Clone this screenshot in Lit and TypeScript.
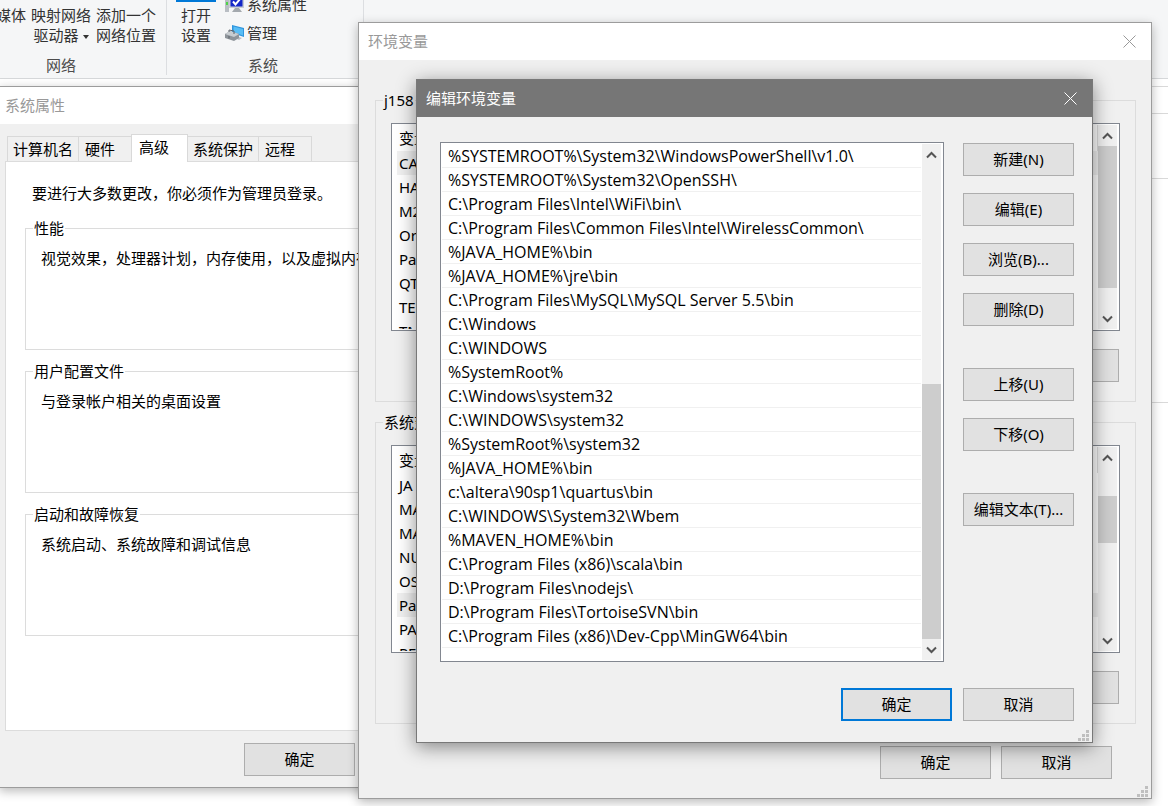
import { LitElement, html, css, svg, nothing } from "lit";
import { customElement, property } from "lit/decorators.js";
import { classMap } from "lit/directives/class-map.js";

const base = css`
  :host {
    display: block;
    font-family: "Noto Sans", "Noto Sans CJK SC", sans-serif;
    font-size: 15px;
    line-height: 20px;
    color: #000;
  }
  *,
  *::before,
  *::after {
    box-sizing: border-box;
  }
  button {
    font: inherit;
    color: inherit;
    padding: 0;
    margin: 0;
  }
`;

const push = css`
  .push {
    display: block;
    width: 111px;
    height: 33px;
    flex: none;
    padding-bottom: 2px;
    background: #e1e1e1;
    border: 1px solid #adadad;
    text-align: center;
    white-space: nowrap;
  }
  .push.default {
    border: 2px solid #0078d7;
  }
`;

/** A desktop window: title bar, close button, body and optional resize grip. */
@customElement("desk-window")
class DeskWindow extends LitElement {
  static styles = [
    base,
    css`
      .frame {
        display: flex;
        flex-direction: column;
        background: #f0f0f0;
        border: 1px solid #9c9c9c;
        box-shadow: 0 3px 10px rgba(0, 0, 0, 0.28);
      }
      .frame.active {
        border-color: #787878;
        box-shadow: 0 4px 18px rgba(0, 0, 0, 0.45);
      }
      .bar {
        display: flex;
        align-items: center;
        justify-content: space-between;
        height: 37px;
        padding: 0 14px 0 9px;
        background: #fff;
        color: #999;
      }
      .active .bar {
        background: #767676;
        color: #fff;
      }
      h1 {
        margin: 0;
        padding-bottom: 2px;
        font-size: 15px;
        font-weight: 400;
      }
      .tight .bar {
        padding-left: 5px;
      }
      .close {
        display: grid;
        place-items: center;
        width: 15px;
        height: 15px;
        border: 0;
        background: none;
      }
      .grip {
        position: absolute;
        right: 4px;
        bottom: 2px;
        display: block;
      }
    `,
  ];
  @property() heading = "";
  @property({ type: Boolean }) active = false;
  @property({ type: Boolean }) tight = false;
  @property({ type: Boolean }) grip = false;

  render() {
    const dots = [[8, 0], [4, 4], [8, 4], [0, 8], [4, 8], [8, 8]];
    return html`<section class=${classMap({ frame: true, active: this.active, tight: this.tight })}>
      <header class="bar">
        <h1>${this.heading}</h1>
        <button class="close" aria-label="关闭">
          <svg width="13" height="13" viewBox="0 0 13 13" fill="none" stroke="currentColor">
            <path d="M.5.5l12 12M12.5.5l-12 12" />
          </svg>
        </button>
      </header>
      <slot></slot>
      ${this.grip
        ? html`<svg class="grip" width="11" height="11" fill="#bfbfbf">
            ${dots.map(([x, y]) => svg`<rect x=${x} y=${y} width="3" height="3" />`)}
          </svg>`
        : nothing}
    </section>`;
  }
}

@customElement("scroll-rail")
class ScrollRail extends LitElement {
  static styles = [
    base,
    css`
      :host {
        display: flex;
        flex-direction: column;
        flex: none;
        width: 20px;
        background: #f0f0f0;
        border-right: 1px solid #fff;
      }
      .arrow {
        display: grid;
        place-items: center;
        flex: none;
        height: 21px;
        border: 0;
        background: none;
        color: #555;
      }
      .track {
        flex: 1;
        display: flex;
        flex-direction: column;
      }
      .thumb {
        background: #cdcdcd;
      }
    `,
  ];
  /** Free track before the thumb, thumb, and free track after it, as shares. */
  @property({ attribute: false }) parts: [number, number, number] = [0, 1, 1];

  render() {
    const [before, thumb, after] = this.parts;
    const arrow = (d: string) => html`<svg width="11" height="8" viewBox="0 0 11 8" fill="none"
      stroke="currentColor" stroke-width="2"><path d=${d} /></svg>`;
    return html`
      <button class="arrow" aria-label="向上滚动">${arrow("M1 6.5L5.5 2L10 6.5")}</button>
      <div class="track">
        <div style="flex:${before}"></div>
        <div class="thumb" style="flex:${thumb}"></div>
        <div style="flex:${after}"></div>
      </div>
      <button class="arrow" aria-label="向下滚动">${arrow("M1 1.5L5.5 6L10 1.5")}</button>
    `;
  }
}

@customElement("explorer-ribbon")
class ExplorerRibbon extends LitElement {
  static styles = [
    base,
    css`
      :host {
        color: #333;
      }
      .ribbon {
        display: flex;
        height: 79px;
        background: #f5f6f7;
        border-bottom: 1px solid #d6d8da;
        overflow: hidden;
      }
      .group {
        display: flex;
        flex-direction: column;
        flex: none;
        justify-content: space-between;
        height: 75px;
        border-right: 1px solid #dcdee1;
      }
      .network {
        width: 211px;
        margin-left: -44px;
      }
      .system {
        width: 197px;
      }
      .tools {
        display: flex;
        align-items: flex-end;
        height: 48px;
      }
      .network .tools {
        gap: 5px;
        justify-content: flex-end;
        padding-right: 10px;
      }
      .system .tools {
        padding-left: 9px;
        gap: 9px;
      }
      .big,
      .small {
        border: 0;
        background: none;
        white-space: nowrap;
      }
      .big {
        display: flex;
        flex-direction: column;
        align-items: center;
        width: 60px;
        height: 48px;
        line-height: 20px;
        padding-top: 5px;
      }
      .big.open {
        width: 40px;
        border-top: 2px solid #0078d7;
        padding-top: 3px;
      }
      .caret {
        display: inline-block;
        border: 3px solid transparent;
        border-top: 4px solid #333;
        border-bottom: 0;
        margin-left: 4px;
        vertical-align: middle;
      }
      .stack {
        display: flex;
        flex-direction: column;
      }
      .small {
        display: flex;
        align-items: center;
        gap: 3px;
        height: 29px;
        padding-bottom: 2px;
      }
      .name {
        text-align: center;
        color: #4c4c4c;
      }
      .system .name {
        padding-right: 4px;
      }
      .line {
        border-top: 1px solid #d9d9d9;
      }
      .nav {
        height: 27px;
        margin-top: 7px;
      }
      .head {
        height: 65px;
      }
      .section {
        height: 224px;
      }
    `,
  ];
  render() {
    return html`
      <div class="ribbon">
        <div class="group network">
          <div class="tools">
            <button class="big"><span>访问媒体</span></button>
            <button class="big"><span>映射网络</span><span>驱动器<i class="caret"></i></span></button>
            <button class="big"><span>添加一个</span><span>网络位置</span></button>
          </div>
          <div class="name">网络</div>
        </div>
        <div class="group system">
          <div class="tools">
            <button class="big open"><span>打开</span><span>设置</span></button>
            <div class="stack">
              <button class="small">
                <svg width="19" height="18" viewBox="0 0 19 18">
                  <path d="M0 5h4v12H0z" fill="#b9bec4" />
                  <path d="M1 7h2v3H1z" fill="#4fd34a" />
                  <path d="M4 0h15v13H4z" fill="#c9ced3" />
                  <path d="M5.500 0h12v11.500h-12z" fill="#1528c8" />
                  <path d="M8 6.500l2.500 3L15 4" fill="none" stroke="#fff" stroke-width="2" />
                  <path d="M10 13h4l3 4H7z" fill="#a4a9ae" />
                </svg>
                <span>系统属性</span>
              </button>
              <button class="small">
                <svg width="19" height="18" viewBox="0 0 19 18">
                  <path d="M7 1l12 3v9L7 9z" fill="#2f95dd" />
                  <path d="M8.500 2.500l9.500 2.500v6.500L8.500 8z" fill="#58bdf5" />
                  <path d="M11 12l6 2-3 2-4-2z" fill="#b8bdc2" />
                  <path d="M0 10l5-3 9 3v4l-5 3-9-3z" fill="#8e949a" />
                  <path d="M0 10l5-3 9 3-5 3z" fill="#c8cdd1" />
                  <path d="M4 8v-2l5 1v3M4 12v2.500" fill="none" stroke="#5f656b" />
                </svg>
                <span>管理</span>
              </button>
            </div>
          </div>
          <div class="name">系统</div>
        </div>
      </div>
      <div class="line nav"></div>
      <div class="line head"></div>
      <div class="line section"></div>
      <div class="line"></div>
    `;
  }
}

@customElement("system-properties")
class SystemProperties extends LitElement {
  static styles = [
    base,
    push,
    css`
      .body {
        padding: 10px 6px 11px 5px;
      }
      .tabs {
        display: flex;
        align-items: flex-end;
        padding-left: 2px;
        height: 27px;
      }
      .tab {
        height: 25px;
        padding: 0 5px 1px;
        border: 1px solid #d9d9d9;
        border-bottom: 0;
        border-right: 0;
        background: #f0f0f0;
        text-align: left;
        white-space: nowrap;
      }
      .tab.wide {
        padding-left: 6px;
        padding-right: 16px;
      }
      .tab:last-child {
        border-right: 1px solid #d9d9d9;
      }
      .tab.on {
        height: 28px;
        margin-bottom: -1px;
        padding: 0 18px 4px 7px;
        border-right: 1px solid #d9d9d9;
        background: #fff;
        z-index: 1;
      }
      .tab.on + .tab {
        border-left: 0;
      }
      .panel {
        display: flex;
        flex-direction: column;
        gap: 11px;
        height: 570px;
        padding: 21px 19px;
        background: #fff;
        border: 1px solid #dcdcdc;
      }
      p {
        margin: 0;
        white-space: nowrap;
      }
      .intro {
        margin-left: 7px;
        margin-bottom: 4px;
      }
      fieldset {
        height: 132px;
        min-width: 0;
        margin: 0;
        padding: 10px 15px;
        border: 1px solid #dcdcdc;
      }
      legend {
        margin-left: -8px;
        padding: 0 1px;
      }
      .actions {
        display: flex;
        justify-content: flex-end;
        padding: 12px 137px 0 0;
      }
    `,
  ];
  render() {
    const groups = [
      ["性能", "视觉效果，处理器计划，内存使用，以及虚拟内存"],
      ["用户配置文件", "与登录帐户相关的桌面设置"],
      ["启动和故障恢复", "系统启动、系统故障和调试信息"],
    ];
    return html`<desk-window heading="系统属性" tight>
      <div class="body">
        <div class="tabs" role="tablist">
          <button class="tab" role="tab">计算机名</button>
          <button class="tab wide" role="tab">硬件</button>
          <button class="tab on" role="tab" aria-selected="true">高级</button>
          <button class="tab" role="tab">系统保护</button>
          <button class="tab wide" role="tab">远程</button>
        </div>
        <div class="panel" role="tabpanel">
          <p class="intro">要进行大多数更改，你必须作为管理员登录。</p>
          ${groups.map(
            ([name, text]) => html`<fieldset><legend>${name}</legend><p>${text}</p></fieldset>`,
          )}
        </div>
        <div class="actions"><button class="push">确定</button></div>
      </div>
    </desk-window>`;
  }
}

interface VariableGroup {
  title: string;
  names: string[];
  selected: number;
  parts: [number, number, number];
}

@customElement("environment-variables")
class EnvironmentVariables extends LitElement {
  static styles = [
    base,
    push,
    css`
      .body {
        display: flex;
        flex-direction: column;
        gap: 10px;
        padding: 30px 15px 19px 16px;
      }
      fieldset {
        display: block;
        min-width: 0;
        margin: 0;
        padding: 13px 15px 19px;
        border: 1px solid #dcdcdc;
      }
      legend {
        margin-left: -8px;
        padding: 0 1px;
      }
      .box {
        display: flex;
        height: 208px;
        padding: 1px;
        background: #fff;
        border: 1px solid #828790;
      }
      .rows {
        flex: 1;
        overflow: hidden;
        padding-left: 4px;
      }
      table {
        width: 100%;
        border-collapse: collapse;
      }
      th,
      td {
        height: 24px;
        padding: 0 2px;
        font-weight: 400;
        text-align: left;
      }
      th {
        height: 26px;
        border-right: 1px solid #dcdcdc;
      }
      .picked {
        background: #f0f0f0;
      }
      .actions {
        display: flex;
        justify-content: flex-end;
        gap: 10px;
      }
      .inner {
        padding: 18px 1px 0 0;
      }
      .outer {
        padding: 12px 24px 0 0;
      }
    `,
  ];
  render() {
    const groups: VariableGroup[] = [
      { title: "j158", names: ["CA", "HA", "M2", "Or", "Pa", "QT", "TE", "TM"], selected: 0, parts: [0, 142, 20] },
      { title: "系统变量", names: ["JA", "MA", "MA", "NU", "OS", "Pa", "PA", "PE"], selected: 5, parts: [28, 47, 87] },
    ];
    return html`<desk-window heading="环境变量" grip>
      <div class="body">
        ${groups.map(
          (group) => html`<fieldset>
            <legend>${group.title}</legend>
            <div class="box">
              <div class="rows">
                <table>
                  <thead><tr><th scope="col">变量</th></tr></thead>
                  <tbody>
                    ${group.names.map(
                      (name, i) => html`<tr class=${classMap({ picked: i === group.selected })}><td>${name}</td></tr>`,
                    )}
                  </tbody>
                </table>
              </div>
              <scroll-rail .parts=${group.parts}></scroll-rail>
            </div>
            <div class="actions inner"><button class="push" aria-label="删除"></button></div>
          </fieldset>`,
        )}
        <div class="actions outer">
          <button class="push">确定</button>
          <button class="push">取消</button>
        </div>
      </div>
    </desk-window>`;
  }
}

@customElement("edit-variable")
class EditVariable extends LitElement {
  static styles = [
    base,
    push,
    css`
      .body {
        padding: 25px 18px 21px 23px;
      }
      .main {
        display: flex;
        gap: 19px;
      }
      .box {
        display: flex;
        flex: 1;
        min-width: 0;
        padding: 1px;
        background: #fff;
        border: 1px solid #828790;
      }
      ul {
        flex: 1;
        min-width: 0;
        margin: 0;
        padding: 0 1px 12px 0;
        list-style: none;
      }
      li {
        height: 24px;
        padding: 2px 6px 1px;
        border-bottom: 1px solid #f0f0f0;
        font-family: "Open Sans", "Noto Sans CJK SC", sans-serif;
        font-size: 16px;
        white-space: nowrap;
      }
      .side {
        display: flex;
        flex-direction: column;
        gap: 42px;
        padding-top: 1px;
      }
      .set {
        display: flex;
        flex-direction: column;
        gap: 17px;
      }
      .actions {
        display: flex;
        justify-content: flex-end;
        gap: 11px;
        padding-top: 26px;
      }
    `,
  ];
  paths = [
    "%SYSTEMROOT%\\System32\\WindowsPowerShell\\v1.0\\",
    "%SYSTEMROOT%\\System32\\OpenSSH\\",
    "C:\\Program Files\\Intel\\WiFi\\bin\\",
    "C:\\Program Files\\Common Files\\Intel\\WirelessCommon\\",
    "%JAVA_HOME%\\bin",
    "%JAVA_HOME%\\jre\\bin",
    "C:\\Program Files\\MySQL\\MySQL Server 5.5\\bin",
    "C:\\Windows",
    "C:\\WINDOWS",
    "%SystemRoot%",
    "C:\\Windows\\system32",
    "C:\\WINDOWS\\system32",
    "%SystemRoot%\\system32",
    "%JAVA_HOME%\\bin",
    "c:\\altera\\90sp1\\quartus\\bin",
    "C:\\WINDOWS\\System32\\Wbem",
    "%MAVEN_HOME%\\bin",
    "C:\\Program Files (x86)\\scala\\bin",
    "D:\\Program Files\\nodejs\\",
    "D:\\Program Files\\TortoiseSVN\\bin",
    "C:\\Program Files (x86)\\Dev-Cpp\\MinGW64\\bin",
  ];
  sets = [["新建(N)", "编辑(E)", "浏览(B)...", "删除(D)"], ["上移(U)", "下移(O)"], ["编辑文本(T)..."]];

  render() {
    return html`<desk-window heading="编辑环境变量" active grip>
      <div class="body">
        <div class="main">
          <div class="box">
            <ul>
              ${this.paths.map((path) => html`<li>${path}</li>`)}
            </ul>
            <scroll-rail .parts=${[219, 255, 0]}></scroll-rail>
          </div>
          <div class="side">
            ${this.sets.map(
              (set) => html`<div class="set">
                ${set.map((label) => html`<button class="push">${label}</button>`)}
              </div>`,
            )}
          </div>
        </div>
        <div class="actions">
          <button class="push default">确定</button>
          <button class="push">取消</button>
        </div>
      </div>
    </desk-window>`;
  }
}

@customElement("app-root")
class AppRoot extends LitElement {
  static styles = css`
    :host {
      display: block;
      position: relative;
      min-height: 100vh;
      background: #fff;
      overflow: hidden;
    }
    .win {
      position: absolute;
    }
    .properties {
      left: -1px;
      top: 86px;
      width: 500px;
    }
    .variables {
      left: 358px;
      right: 16px;
      top: 22px;
    }
    .editor {
      left: 416px;
      right: 75px;
      top: 79px;
    }
  `;
  render() {
    return html`
      <explorer-ribbon></explorer-ribbon>
      <system-properties class="win properties"></system-properties>
      <environment-variables class="win variables"></environment-variables>
      <edit-variable class="win editor"></edit-variable>
    `;
  }
}
